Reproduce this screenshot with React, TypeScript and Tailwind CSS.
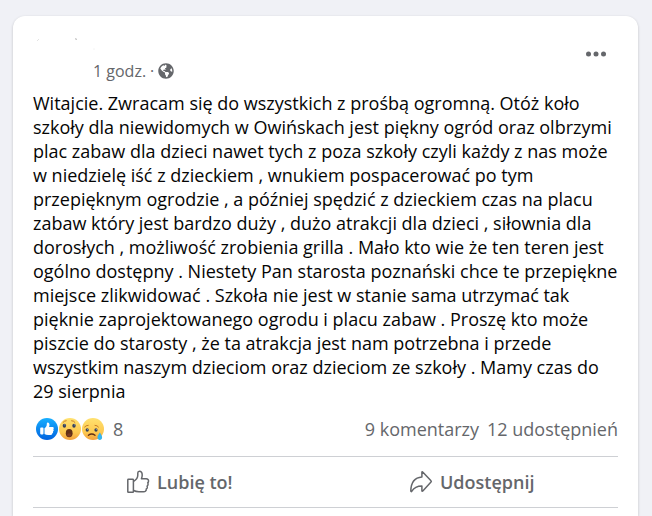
import type { ReactNode } from "react";
import { FaGlobeAmericas } from "react-icons/fa";

const lines = [
  "Witajcie. Zwracam się do wszystkich z prośbą ogromną. Otóż koło",
  "szkoły dla niewidomych w Owińskach jest piękny ogród oraz olbrzymi",
  "plac zabaw dla dzieci nawet tych z poza szkoły czyli każdy z nas może",
  "w niedzielę iść z dzieckiem , wnukiem pospacerować po tym",
  "przepięknym ogrodzie , a później spędzić z dzieckiem czas na placu",
  "zabaw który jest bardzo duży , dużo atrakcji dla dzieci , siłownia dla",
  "dorosłych , możliwość zrobienia grilla . Mało kto wie że ten teren jest",
  "ogólno dostępny . Niestety Pan starosta poznański chce te przepiękne",
  "miejsce zlikwidować . Szkoła nie jest w stanie sama utrzymać tak",
  "pięknie zaprojektowanego ogrodu i placu zabaw . Proszę kto może",
  "piszcie do starosty , że ta atrakcja jest nam potrzebna i przede",
  "wszystkim naszym dzieciom oraz dzieciom ze szkoły . Mamy czas do",
  "29 sierpnia",
];

function LikeBadge() {
  return (
    <svg viewBox="0 0 22 22" className="size-[22px]" aria-hidden="true">
      <defs>
        <linearGradient id="like" x1="0" y1="0" x2="0" y2="1">
          <stop offset="0" stopColor="#18afff" />
          <stop offset="1" stopColor="#0062df" />
        </linearGradient>
      </defs>
      <circle cx="11" cy="11" r="11" fill="url(#like)" />
      <path
        d="M5 9.6h1.7c.5 0 .8.3.8.8v5.2c0 .5-.3.8-.8.8H5c-.5 0-.8-.3-.8-.8v-5.2c0-.5.3-.8.8-.8zm3.5.6c1.5-1 2.3-2.3 2.3-4.3 0-1 .4-1.5 1-1.5 1.1 0 1.7 1 1.7 2.3 0 .8-.2 1.5-.5 2.2h3.4c1 0 1.5.7 1.4 1.4-.1.4-.3.7-.6.9.4.3.6.7.5 1.2-.1.5-.4.8-.7 1 .3.7.1 1.6-.7 1.9.2 1-.5 1.7-1.7 1.7h-2.4c-1.5 0-2.7-.4-3.7-1z"
        fill="#fff"
      />
    </svg>
  );
}

function WowBadge() {
  return (
    <svg viewBox="0 0 22 22" className="size-[22px]" aria-hidden="true">
      <defs>
        <linearGradient id="face" x1="0" y1="0" x2="0" y2="1">
          <stop offset="0" stopColor="#ffe16f" />
          <stop offset="0.65" stopColor="#fdc951" />
          <stop offset="1" stopColor="#f3a03c" />
        </linearGradient>
      </defs>
      <circle cx="11" cy="11" r="11" fill="url(#face)" />
      <path d="M4 4.4q1.2-1.6 3.2-1.7M12.6 2.7q2.2 0 3.4 1.7" stroke="#c27320" strokeWidth="0.9" fill="none" strokeLinecap="round" />
      <ellipse cx="5.4" cy="7.7" rx="1.7" ry="2" fill="#36415b" />
      <ellipse cx="15" cy="7.7" rx="1.7" ry="2" fill="#36415b" />
      <circle cx="5.8" cy="6.8" r="0.6" fill="#8296bb" />
      <circle cx="15.4" cy="6.8" r="0.6" fill="#8296bb" />
      <ellipse cx="10.2" cy="15.2" rx="3.4" ry="4.1" fill="#612e15" />
      <ellipse cx="10.2" cy="17" rx="2.2" ry="1.7" fill="#7b3920" />
    </svg>
  );
}

function SadBadge() {
  return (
    <svg viewBox="0 0 22 22" className="size-[22px]" aria-hidden="true">
      <circle cx="11" cy="11" r="11" fill="url(#face)" />
      <path d="M2.6 9q1.3-1.7 3.6-1.7M13 7.3q2.3 0 3.5 1.7" stroke="#c27320" strokeWidth="0.9" fill="none" strokeLinecap="round" />
      <ellipse cx="5.2" cy="12" rx="1.6" ry="1.8" fill="#36415b" />
      <ellipse cx="14" cy="12" rx="1.6" ry="1.8" fill="#36415b" />
      <circle cx="5.6" cy="11.3" r="0.6" fill="#8296bb" />
      <circle cx="14.4" cy="11.3" r="0.6" fill="#8296bb" />
      <path d="M6.4 17.3q3.3-2.6 6.6 0" stroke="#612e15" strokeWidth="1.3" fill="none" strokeLinecap="round" />
      <path d="M17.8 14.6c1.5 2.2 2.3 3.5 2.3 4.8 0 1.5-1 2.5-2.3 2.5s-2.3-1-2.3-2.5c0-1.3.8-2.6 2.3-4.8z" fill="#35b5ed" />
    </svg>
  );
}

function LikeIcon() {
  return (
    <svg viewBox="0 0 24 24" className="size-6" fill="none" stroke="#65676b" strokeWidth="1.5" strokeLinejoin="round" aria-hidden="true">
      <rect x="1.8" y="9.3" width="5.6" height="13" rx="0.6" />
      <path d="M7.6 11.4c2.6-1.4 4.2-3.4 4.2-6.3V3c0-1.2.6-1.8 1.6-1.8 1.8 0 2.8 1.7 2.8 3.8 0 1.4-.3 2.6-.8 3.8h4.8c1.6 0 2.5 1.1 2.3 2.5-.1.7-.4 1.2-.8 1.5.4.5.5 1.1.3 1.9-.1.8-.5 1.2-.9 1.5.2.5.3 1.1.1 1.8-.2.5-.5.8-.9 1 .1 1.6-.9 2.7-2.8 2.7h-4.6c-2 0-3.8-.4-5.3-1.2" />
    </svg>
  );
}

function ShareIcon() {
  return (
    <svg viewBox="0 0 24 24" className="size-6" fill="none" stroke="#65676b" strokeWidth="1.5" strokeLinejoin="round" aria-hidden="true">
      <path d="M12.9 2.2v4.9C6.4 7.6 2 12 1.8 21.1c0 .6.6.7.9.2 2.2-3.6 5.5-5.3 10.2-5.3v4.7c0 .5.5.7.9.3l8.2-9c.4-.4.4-.9 0-1.3l-8.3-8.8c-.3-.4-.8-.2-.8.3z" />
    </svg>
  );
}

function ActionButton({ icon, label }: { icon: ReactNode; label: string }) {
  return (
    <button type="button" className="flex flex-1 cursor-pointer items-center justify-center gap-[7px] text-lg font-semibold">
      {icon}
      {label}
    </button>
  );
}

export default function App() {
  return (
    <main className="flex min-h-screen flex-col bg-[#f0f1f6] pt-4 pr-3.5 pl-[13px] font-['Open_Sans','Noto_Sans',sans-serif] text-[#65676b]">
      <article className="flex-1 rounded-t-xl bg-white px-5 pb-2 shadow-[0_1px_3px_rgba(0,0,0,0.2)]">
        <header className="flex h-[75px] justify-between">
          <div className="flex flex-col pt-[19px]">
            <svg viewBox="0 0 64 24" className="h-6 w-16" aria-hidden="true">
              <path d="M4 6l2-2M42 3l2 2" stroke="#d0d0d0" strokeWidth="0.6" />
              <circle cx="43" cy="4" r="0.6" fill="#888" />
              <circle cx="61" cy="14" r="0.4" fill="#ccc" />
            </svg>
            <div className="flex items-center gap-1 pl-[60px] text-base leading-6">
              <a href="#post">1 godz.</a>
              <span>·</span>
              <FaGlobeAmericas className="size-4" aria-label="Publiczne" />
            </div>
          </div>
          <button type="button" aria-label="Więcej" className="mt-7 mr-3 h-5 cursor-pointer">
            <svg viewBox="0 0 20 20" className="size-5" fill="#65676b" aria-hidden="true">
              <circle cx="2.5" cy="10" r="2.5" />
              <circle cx="10" cy="10" r="2.5" />
              <circle cx="17.5" cy="10" r="2.5" />
            </svg>
          </button>
        </header>

        <p className="text-lg leading-6 whitespace-nowrap text-[#050505]">
          {lines.map((line) => (
            <span key={line} className="block">
              {line}
            </span>
          ))}
        </p>

        <div className="flex h-[52px] items-center justify-between text-lg">
          <div className="flex items-center gap-px pl-[3px]">
            <LikeBadge />
            <WowBadge />
            <SadBadge />
            <span className="pl-2">8</span>
          </div>
          <div className="flex gap-2">
            <a href="#comments">9 komentarzy</a>
            <a href="#shares">12 udostępnień</a>
          </div>
        </div>

        <div className="mt-px flex h-[52px] border-y border-[#ced0d4]">
          <ActionButton icon={<LikeIcon />} label="Lubię to!" />
          <ActionButton icon={<ShareIcon />} label="Udostępnij" />
        </div>
      </article>
    </main>
  );
}
